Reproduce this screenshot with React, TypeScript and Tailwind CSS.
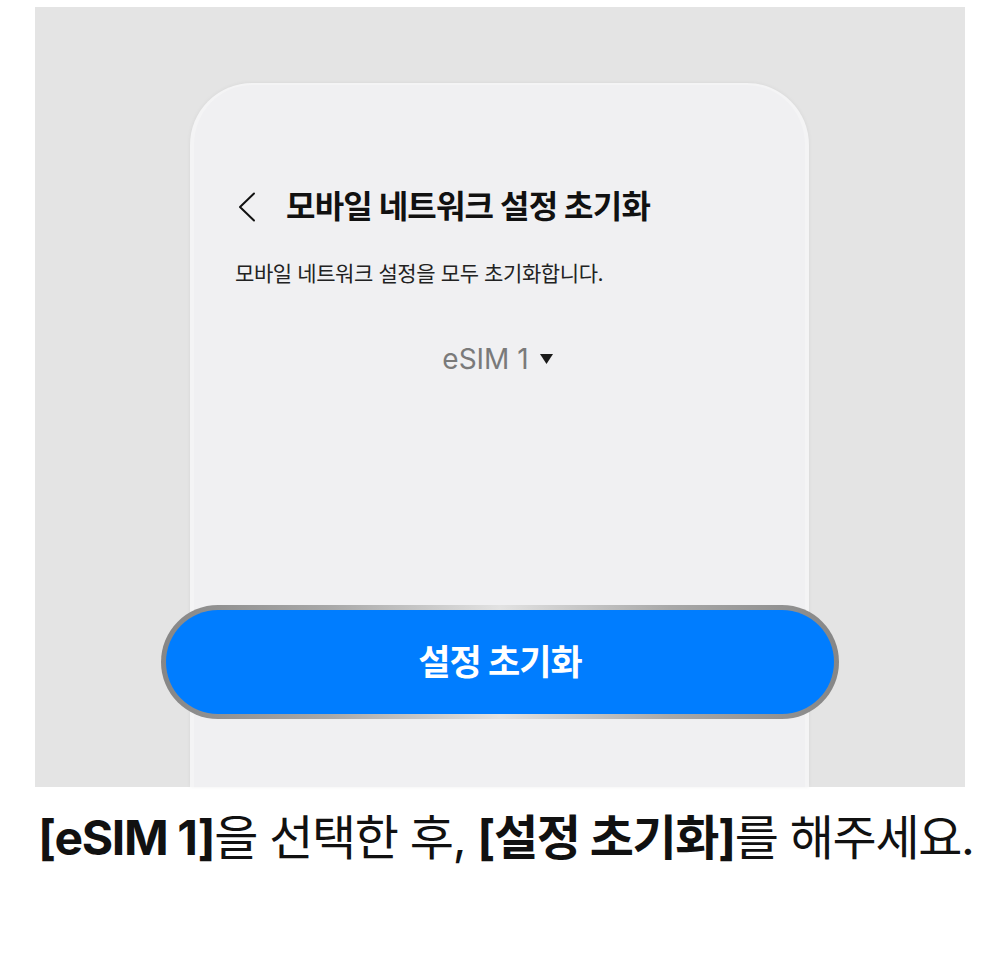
const KR = "font-['Inter','Noto_Sans_CJK_KR',sans-serif]";

export default function App() {
  return (
    <div className={`w-[1000px] h-[960px] bg-white ${KR}`}>
      <div className="pt-[7px] pl-[35px]">
        <div className="relative w-[930px] h-[780px] bg-[#e4e4e4] flex flex-col">
          {/* phone screen */}
          <div className="ml-[155px] mt-[76px] w-[619px] flex-1 rounded-t-[62px] border-x-[4px] border-t-[2px] border-[#f4f4f5] bg-[#f0f0f2] shadow-[0_0_4px_rgba(0,0,0,0.06)]">
            <div className="pl-[44px] pt-[104px]">
              <div className="flex items-center h-[36px]">
                <svg width="18" height="30" viewBox="0 0 18 30" className="shrink-0">
                  <path d="M16 1.5 2 15l14 13.5" fill="none" stroke="#111" strokeWidth="2" strokeLinecap="round" strokeLinejoin="round" />
                </svg>
                <span className="ml-[30px] text-[32px] font-bold tracking-[-0.8px] text-[#111]">
                  모바일 네트워크 설정 초기화
                </span>
              </div>
              <div className="-ml-[3px] mt-[36px] text-[21px] tracking-[-0.4px] text-[#222] leading-[26px]">
                모바일 네트워크 설정을 모두 초기화합니다.
              </div>
            </div>
            <div className="mt-[58px] flex items-center justify-center gap-[11px] pr-[4px]">
              <span className="text-[28px] text-[#7a7a7a] leading-none">eSIM 1</span>
              <svg width="13" height="10" viewBox="0 0 13 10">
                <path d="M0 0h13L6.5 10z" fill="#1a1a1a" />
              </svg>
            </div>
          </div>

          {/* reset button, laid over the screen edges */}
          <div className="absolute left-[126px] top-[598px] w-[678px] h-[114px] rounded-full p-[5px] bg-[linear-gradient(90deg,#868686_0%,#a8a8a8_25%,#e2e2e2_50%,#a8a8a8_75%,#868686_100%)]">
            <div className="w-full h-full rounded-full bg-[#007dff] flex items-center justify-center">
              <span className="text-[35px] font-bold tracking-[-1px] text-white">설정 초기화</span>
            </div>
          </div>
        </div>
      </div>

      <div className="pl-[38px] mt-[21px] text-[48px] leading-[60px] tracking-[-1.35px] text-[#111] whitespace-nowrap">
        <span className="font-bold">[eSIM 1]</span>
        <span>을 선택한 후, </span>
        <span className="font-bold">[설정 초기화]</span>
        <span>를 해주세요.</span>
      </div>
    </div>
  );
}
